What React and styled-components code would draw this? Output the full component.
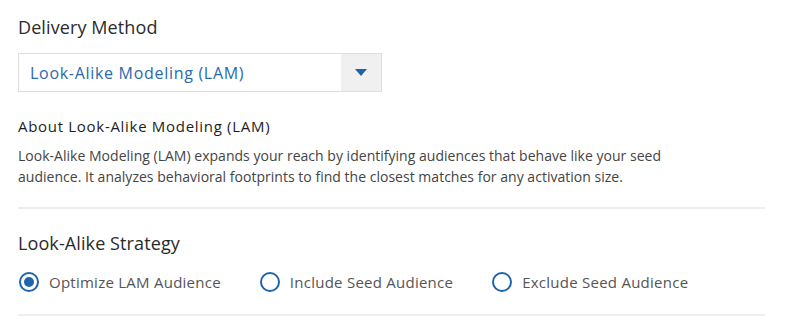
import React, { useState } from "react";
import styled, { createGlobalStyle } from "styled-components";

const Global = createGlobalStyle`
  html, body { margin: 0; padding: 0; background: #fff; }
  body { font-family: "Open Sans", "Noto Sans", sans-serif; }
`;

const Page = styled.div`
  width: 747px;
  padding: 15px 0 0 18px;
  box-sizing: content-box;
`;

const SectionTitle = styled.h2`
  margin: 0;
  font-size: 18px;
  line-height: 24px;
  font-weight: 400;
  color: #2b2b2b;
  letter-spacing: 0.1px;
`;

const Select = styled.div`
  margin-top: 14px;
  width: 364px;
  height: 39px;
  box-sizing: border-box;
  border: 1px solid #dedede;
  display: flex;
  align-items: stretch;
`;

const SelectValue = styled.div`
  flex: 1;
  display: flex;
  align-items: center;
  padding-left: 11px;
  font-size: 16px;
  letter-spacing: 0.7px;
  color: #2a6aad;
`;

const SelectArrow = styled.div`
  width: 40px;
  background: #f0f0f0;
  display: flex;
  align-items: center;
  justify-content: center;
`;

const Triangle = styled.span`
  width: 0;
  height: 0;
  border-left: 6px solid transparent;
  border-right: 6px solid transparent;
  border-top: 7px solid #1f62a8;
`;

const About = styled.div`
  margin-top: 24px;
`;

const AboutTitle = styled.h3`
  margin: 0;
  font-size: 15px;
  line-height: 20px;
  font-weight: 400;
  letter-spacing: 0.7px;
  color: #1e1e1e;
`;

const AboutText = styled.p`
  margin: 9px 0 0;
  font-size: 14px;
  line-height: 21px;
  color: #444;
  letter-spacing: 0.02px;
`;

const Divider = styled.hr`
  margin: ${(p) => p.$top}px 0 0;
  border: 0;
  border-top: 2px solid #eeeeee;
  height: 0;
`;

const Strategy = styled.div`
  margin-top: 22px;
`;

const RadioRow = styled.div`
  margin-top: 17px;
  display: flex;
  align-items: center;
  gap: 39px;
  padding-left: 1px;
`;

const RadioLabel = styled.label`
  display: flex;
  align-items: center;
  gap: 10px;
  font-size: 15px;
  letter-spacing: 0.25px;
  color: #555;
  cursor: pointer;
`;

const RadioCircle = styled.span`
  width: 20px;
  height: 20px;
  box-sizing: border-box;
  border-radius: 50%;
  border: 2px solid #1f65ab;
  display: flex;
  align-items: center;
  justify-content: center;
  &::after {
    content: "";
    width: 10px;
    height: 10px;
    border-radius: 50%;
    background: #1f65ab;
    display: ${(p) => (p.$checked ? "block" : "none")};
  }
`;

const options = ["Optimize LAM Audience", "Include Seed Audience", "Exclude Seed Audience"];

export default function App() {
  const [sel, setSel] = useState(0);
  return (
    <>
      <Global />
      <Page>
        <SectionTitle>Delivery Method</SectionTitle>
        <Select>
          <SelectValue>Look-Alike Modeling (LAM)</SelectValue>
          <SelectArrow>
            <Triangle />
          </SelectArrow>
        </Select>
        <About>
          <AboutTitle>About Look-Alike Modeling (LAM)</AboutTitle>
          <AboutText>
            Look-Alike Modeling (LAM) expands your reach by identifying audiences that behave like your seed
            <br />
            audience. It analyzes behavioral footprints to find the closest matches for any activation size.
          </AboutText>
        </About>
        <Divider $top={20} />
        <Strategy>
          <SectionTitle>Look-Alike Strategy</SectionTitle>
          <RadioRow>
            {options.map((o, i) => (
              <RadioLabel key={o} onClick={() => setSel(i)}>
                <RadioCircle $checked={sel === i} />
                {o}
              </RadioLabel>
            ))}
          </RadioRow>
        </Strategy>
        <Divider $top={22} />
      </Page>
    </>
  );
}
